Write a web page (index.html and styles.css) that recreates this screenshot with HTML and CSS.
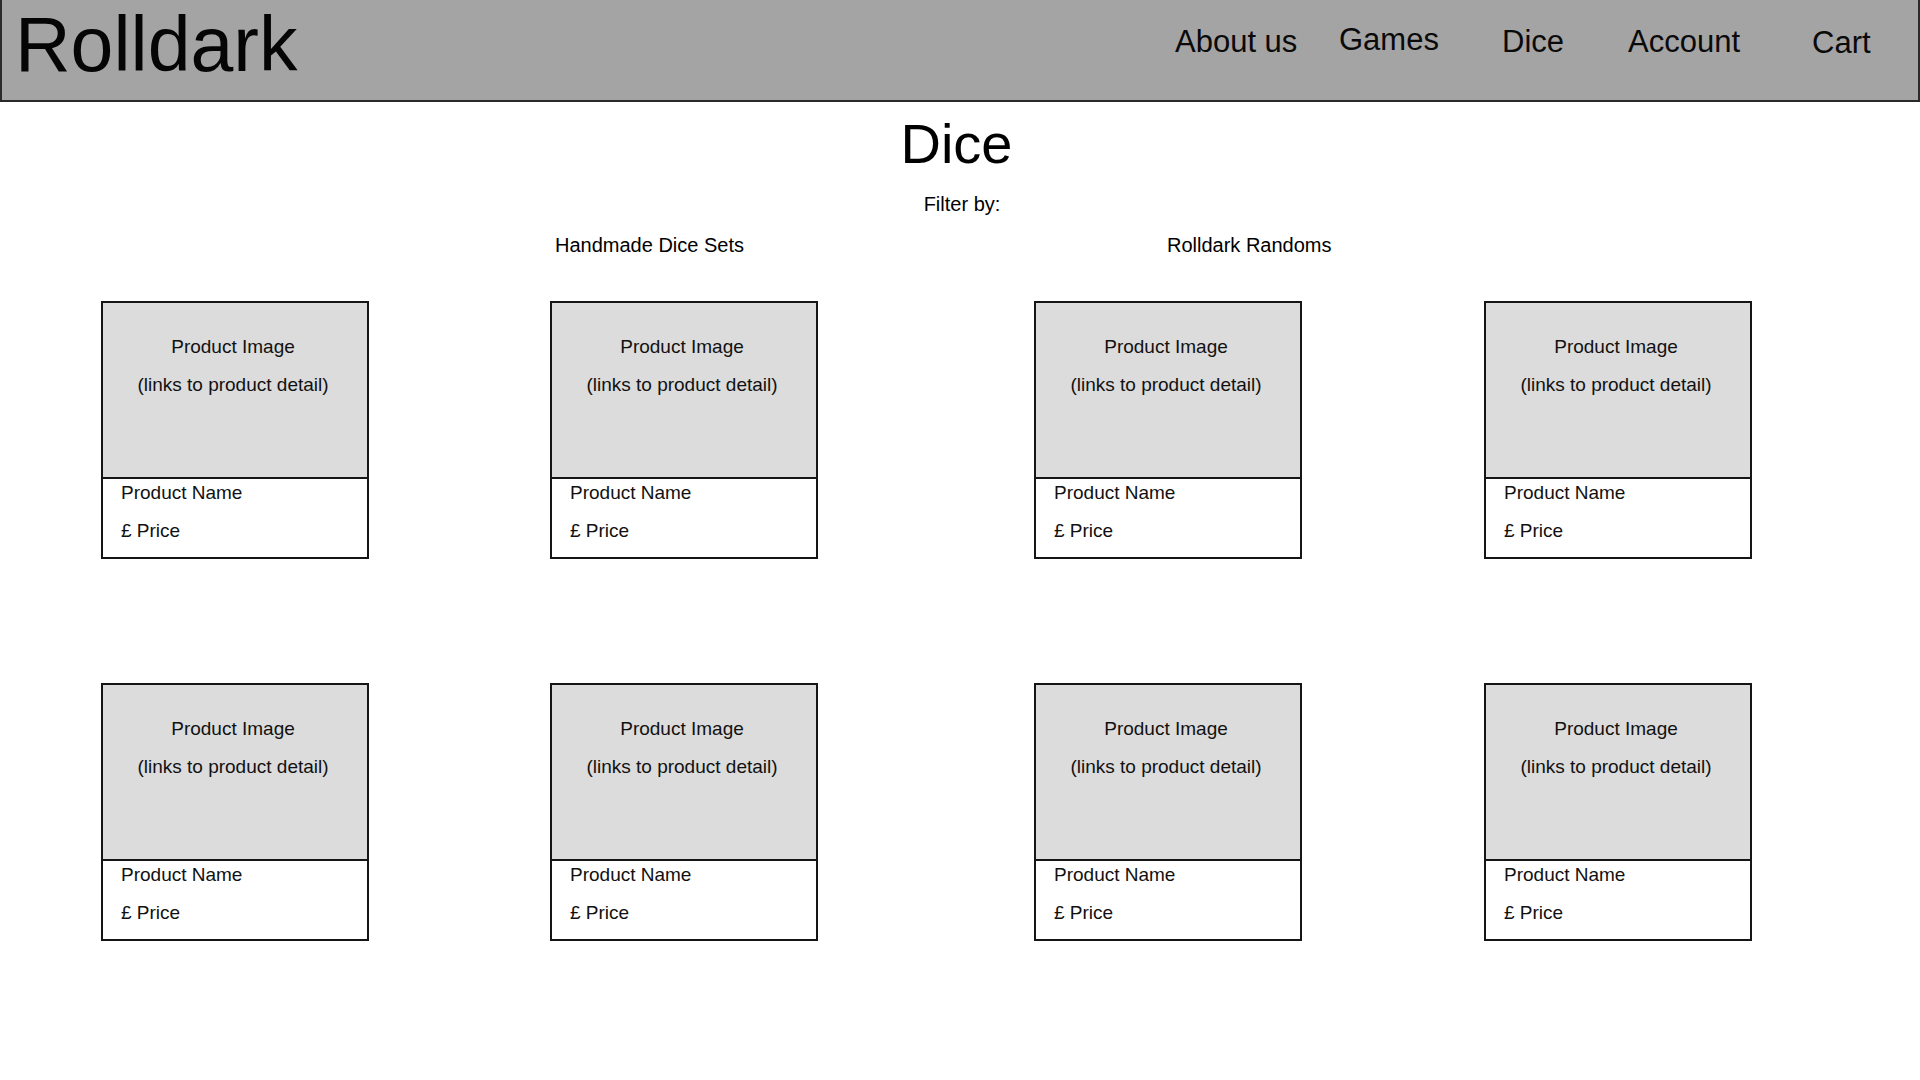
FILE: index.html
```html
<!DOCTYPE html>
<html lang="en">
<head>
<meta charset="utf-8">
<title>Rolldark - Dice</title>
<link rel="stylesheet" href="styles.css">
</head>
<body>
<header class="site-header">
  <div class="logo">Rolldark</div>
  <nav class="nav">
    <a class="nav-link" href="#">About us</a>
    <a class="nav-link nav-games" href="#">Games</a>
    <a class="nav-link" href="#">Dice</a>
    <a class="nav-link" href="#">Account</a>
    <a class="nav-link nav-cart" href="#">Cart</a>
  </nav>
</header>
<main class="page">
  <h1 class="title">Dice</h1>
  <p class="filter-label">Filter by:</p>
  <div class="filters">
    <a class="filter" href="#">Handmade Dice Sets</a>
    <a class="filter filter-second" href="#">Rolldark Randoms</a>
  </div>
  <section class="grid">
    <div class="cell"><div class="card"><div class="card-image"><p>Product Image</p><p>(links to product detail)</p></div><div class="card-info"><p>Product Name</p><p>£ Price</p></div></div></div>
    <div class="cell"><div class="card"><div class="card-image"><p>Product Image</p><p>(links to product detail)</p></div><div class="card-info"><p>Product Name</p><p>£ Price</p></div></div></div>
    <div class="cell"><div class="card"><div class="card-image"><p>Product Image</p><p>(links to product detail)</p></div><div class="card-info"><p>Product Name</p><p>£ Price</p></div></div></div>
    <div class="cell"><div class="card"><div class="card-image"><p>Product Image</p><p>(links to product detail)</p></div><div class="card-info"><p>Product Name</p><p>£ Price</p></div></div></div>
    <div class="cell"><div class="card"><div class="card-image"><p>Product Image</p><p>(links to product detail)</p></div><div class="card-info"><p>Product Name</p><p>£ Price</p></div></div></div>
    <div class="cell"><div class="card"><div class="card-image"><p>Product Image</p><p>(links to product detail)</p></div><div class="card-info"><p>Product Name</p><p>£ Price</p></div></div></div>
    <div class="cell"><div class="card"><div class="card-image"><p>Product Image</p><p>(links to product detail)</p></div><div class="card-info"><p>Product Name</p><p>£ Price</p></div></div></div>
    <div class="cell"><div class="card"><div class="card-image"><p>Product Image</p><p>(links to product detail)</p></div><div class="card-info"><p>Product Name</p><p>£ Price</p></div></div></div>
  </section>
</main>
</body>
</html>
```
FILE: styles.css
```css
* { box-sizing: border-box; }
html, body { margin: 0; padding: 0; background: #ffffff; }
body {
  font-family: "Liberation Sans", Arial, sans-serif;
  color: #000;
  width: 1920px;
  height: 1080px;
  overflow: hidden;
}
p { margin: 0; }
a { color: inherit; text-decoration: none; }

.site-header {
  display: flex;
  align-items: flex-start;
  justify-content: space-between;
  height: 102px;
  background: #a4a4a4;
  border: 2px solid #2a2a2a;
  border-top: none;
}
.logo {
  font-size: 77px;
  line-height: 77px;
  margin-top: 6px;
  padding-left: 13px;
  color: #050505;
}
.nav {
  display: grid;
  grid-template-columns: 164px 163px 126px 184px 58px;
  margin-top: 26px;
  margin-right: 48px;
}
.nav-link {
  font-size: 31px;
  line-height: 31px;
  white-space: nowrap;
  color: #0a0a0a;
}
.nav-games { margin-top: -2px; }
.nav-cart { margin-top: 1px; }

.page { display: flex; flex-direction: column; }
.title {
  margin: 14px 0 0;
  padding-right: 7px;
  font-size: 56px;
  line-height: 55px;
  font-weight: normal;
  text-align: center;
}
.filter-label {
  margin-top: 23px;
  font-size: 20px;
  line-height: 20px;
  text-align: center;
  padding-left: 4px;
}
.filters {
  display: flex;
  margin-top: 21px;
  padding-left: 555px;
  font-size: 20px;
  line-height: 20px;
}
.filter-second { margin-left: 423px; }

.grid {
  display: grid;
  grid-template-columns: 449px 484px 450px 268px;
  row-gap: 124px;
  margin-top: 46px;
  padding-left: 101px;
}
.card {
  width: 268px;
  border: 2px solid #151515;
  background: #fff;
}
.card-image {
  height: 176px;
  background: #dcdcdc;
  border-bottom: 2px solid #151515;
  padding-top: 25px;
  padding-right: 4px;
  text-align: center;
  font-size: 19px;
  line-height: 38px;
  color: #111;
}
.card-info {
  height: 78px;
  padding: 3px 0 0 18px;
  display: flex;
  flex-direction: column;
  gap: 16px;
  font-size: 19px;
  line-height: 22px;
  color: #111;
}
```
